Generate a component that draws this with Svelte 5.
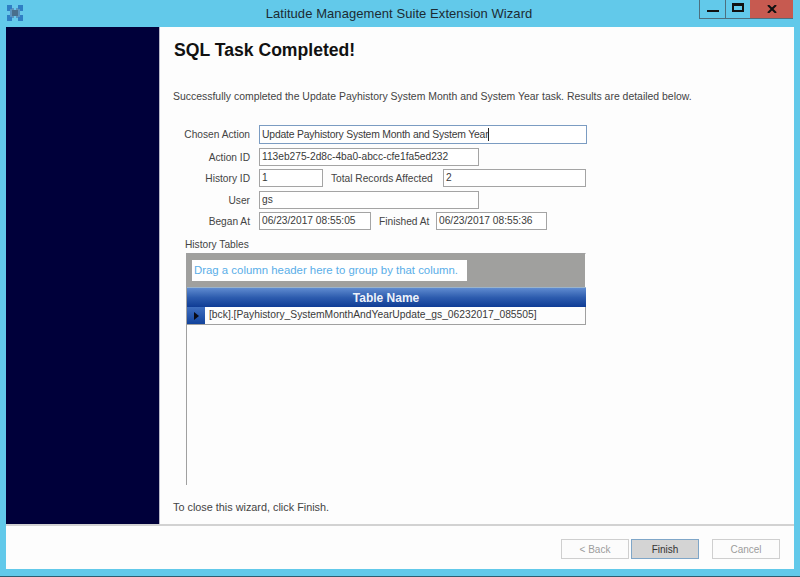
<script>
  const note = 'Successfully completed the Update Payhistory System Month and System Year task. Results are detailed below.';
</script>

<div class="window">
  <header class="titlebar">
    <svg class="appicon" width="16" height="16" viewBox="0 0 16 16" aria-hidden="true">
      <rect width="16" height="16" fill="#5c93bd"/>
      <path d="M0 0h5v4H3v2H0zM11 0h5v6h-3V4h-2zM0 10h3v2h2v4H0zM13 10h3v6h-5v-4h2z" fill="#2f7fc4"/>
      <path d="M5 0h6v3H9v2H7V3H5zM0 6h3v4H0zM13 6h3v4h-3zM7 11h2v2h2v3H5v-3h2z" fill="#67c8ea"/>
      <path d="M5 5h6v6H5z" fill="#4a6f8c"/>
    </svg>
    <span class="title">Latitude Management Suite Extension Wizard</span>
    <div class="controls">
      <div class="ctl min"><span class="dash"></span></div>
      <div class="ctl max"><span class="square"></span></div>
      <div class="ctl close">
        <svg width="10" height="8" viewBox="0 0 10 8" aria-hidden="true"><path d="M1 0l4 4 4-4M1 8l4-4 4 4" fill="none" stroke="#111" stroke-width="2"/></svg>
      </div>
    </div>
  </header>

  <div class="client">
    <div class="upper">
      <aside class="side"></aside>
      <main class="main">
        <h1>SQL Task Completed!</h1>
        <p class="note">{note}</p>

        <div class="row r1">
          <span class="lab">Chosen Action</span>
          <div class="box focus w328">Update Payhistory System Month and System Year<i class="caret"></i></div>
        </div>
        <div class="row r2">
          <span class="lab">Action ID</span>
          <div class="box w220">113eb275-2d8c-4ba0-abcc-cfe1fa5ed232</div>
        </div>
        <div class="row r3">
          <span class="lab">History ID</span>
          <div class="box w64">1</div>
          <span class="lab2 total">Total Records Affected</span>
          <div class="box w143">2</div>
        </div>
        <div class="row r4">
          <span class="lab">User</span>
          <div class="box w220">gs</div>
        </div>
        <div class="row r5">
          <span class="lab">Began At</span>
          <div class="box w112">06/23/2017 08:55:05</div>
          <span class="lab2 fin">Finished At</span>
          <div class="box w111">06/23/2017 08:55:36</div>
        </div>

        <div class="tables-label">History Tables</div>
        <div class="grid">
          <div class="group"><div class="grouptext">Drag a column header here to group by that column.</div></div>
          <div class="colhead">Table Name</div>
          <div class="datarow">
            <div class="indicator"><span class="arrow"></span></div>
            <div class="cell">[bck].[Payhistory_SystemMonthAndYearUpdate_gs_06232017_085505]</div>
          </div>
        </div>

        <p class="closing">To close this wizard, click Finish.</p>
      </main>
    </div>
    <footer class="footer">
      <button class="btn disabled">&lt; Back</button>
      <button class="btn primary">Finish</button>
      <button class="btn disabled cancel">Cancel</button>
    </footer>
  </div>
</div>

<style>
  :global(body) { margin: 0; background: #62c9ea; }
  .window {
    width: 800px; height: 577px; box-sizing: border-box;
    background: #62c9ea; border-bottom: 1px solid #2e5d70;
    display: flex; flex-direction: column;
    font: 10.2px "Liberation Sans", Arial, sans-serif; color: #444;
  }
  .titlebar { height: 27px; flex: none; display: flex; align-items: flex-start; position: relative; }
  .appicon { margin: 5px 0 0 7px; flex: none; }
  .title {
    position: absolute; left: 0; right: 2px; top: 6px; text-align: center;
    font: 13px "Liberation Sans", Arial, sans-serif; color: #1c2b33; letter-spacing: .07px;
  }
  .controls { margin-left: auto; margin-right: 7px; display: flex; position: relative; height: 18px; border: solid #4d6f7e; border-width: 0 0 1px 1px; }
  .ctl { height: 18px; display: flex; justify-content: center; box-sizing: border-box; }
  .min { width: 26px; border-right: 1px solid #4d6f7e; }
  .max { width: 24px; }
  .close { width: 43px; background: #c75a50; align-items: center; }
  .dash { width: 12px; height: 2px; background: #111; margin-top: 10px; }
  .square { border: 2px solid #111; border-top-width: 3px; margin-top: 3px; box-sizing: border-box; width: 12px; height: 9px; }

  .client { margin: 0 6px 7px; flex: 1; background: #fdfdfd; display: flex; flex-direction: column; min-height: 0; }
  .upper { flex: 1; display: flex; min-height: 0; border-bottom: 2px solid #d2d2d2; }
  .side { width: 153px; background: #00003a; border-right: 1px solid #b8b8c8; flex: none; }
  .main { flex: 1; position: relative; padding-left: 13px; min-width: 0; }
  h1 { margin: 14px 0 0 1px; font: bold 17.6px/18px "Liberation Sans", Arial, sans-serif; color: #111; }
  .note { margin: 31px 0 0; line-height: 13px; font-size: 10.44px; }

  .row { display: flex; align-items: center; height: 18px; white-space: nowrap; }
  .r1 { margin-top: 22px; height: 19px; }
  .r2 { margin-top: 4px; }
  .r3 { margin-top: 3px; }
  .r4 { margin-top: 4px; }
  .r5 { margin-top: 3px; }
  .lab { width: 77px; text-align: right; margin-right: 9px; flex: none; }
  .lab2 { flex: none; }
  .total { margin-left: 8px; width: 112px; }
  .fin { margin-left: 8px; width: 57px; }
  .box {
    box-sizing: border-box; height: 18px; line-height: 15px; padding-left: 2px; flex: none;
    border: 1px solid #a4a4a4; background: #fff; color: #3a3a3a; font-size: 10.2px; overflow: hidden;
  }
  .focus { height: 19px; border-color: #7b9cc2; line-height: 16px; display: flex; align-items: center; font-size: 10.4px; letter-spacing: -.2px; }
  .caret { width: 1px; height: 13px; background: #222; flex: none; }
  .w328 { width: 328px; }
  .w220 { width: 220px; }
  .w64 { width: 64px; }
  .w143 { width: 143px; }
  .w112 { width: 112px; }
  .w111 { width: 111px; }

  .tables-label { margin: 8px 0 0 12px; line-height: 13px; }
  .grid {
    margin: 2px 0 0 13px; width: 400px; height: 232px; box-sizing: border-box;
    border: solid #a0a0a0; border-width: 1px 1px 0 1px; display: flex; flex-direction: column;
    border-right-color: transparent;
  }
  .group { height: 33px; background: #a0a09e; padding: 6px 0 0 5px; box-sizing: border-box; flex: none; }
  .grouptext {
    width: 275px; height: 21px; background: #fff; color: #5aaee8; line-height: 21px;
    padding-left: 2px; box-sizing: border-box; font-size: 11.4px; white-space: nowrap;
  }
  .colhead {
    height: 20px; flex: none; text-align: center; line-height: 20px; color: #eef2fa; font-weight: bold; font-size: 12px;
    background: linear-gradient(#5f8bd0, #2d5cae 50%, #0f3c95);
    border-top: 1px solid #9ab4cc; box-sizing: border-box; margin-right: -1px; padding-right: 1px;
  }
  .datarow { display: flex; height: 18px; flex: none; box-sizing: border-box; border-bottom: 1px solid #a0a0a0; margin-right: -1px; border-right: 1px solid #a0a0a0; }
  .indicator {
    width: 18px; flex: none; background: linear-gradient(#3f6fc0, #12439c);
    display: flex; align-items: center; justify-content: center;
  }
  .arrow { width: 0; height: 0; border-left: 5px solid #0b0b14; border-top: 4px solid transparent; border-bottom: 4px solid transparent; }
  .cell { padding-left: 4px; line-height: 16px; color: #3a3a3a; white-space: nowrap; font-size: 10.3px; }
  .closing { margin: 16px 0 0; line-height: 13px; font-size: 10.85px; }

  .footer { height: 43px; flex: none; display: flex; align-items: flex-start; padding: 13px 14px 0 0; box-sizing: border-box; justify-content: flex-end; }
  .btn {
    width: 68px; height: 20px; padding: 0; box-sizing: border-box; background: #fcfcfc;
    font: 10px "Liberation Sans", Arial, sans-serif; border: 1px solid #cfcfcf; color: #9c9c9c;
  }
  .primary { background: #d4d4d4; border: 1px solid #7fa6c8; color: #333; margin-left: 2px; }
  .cancel { margin-left: 13px; }
</style>
